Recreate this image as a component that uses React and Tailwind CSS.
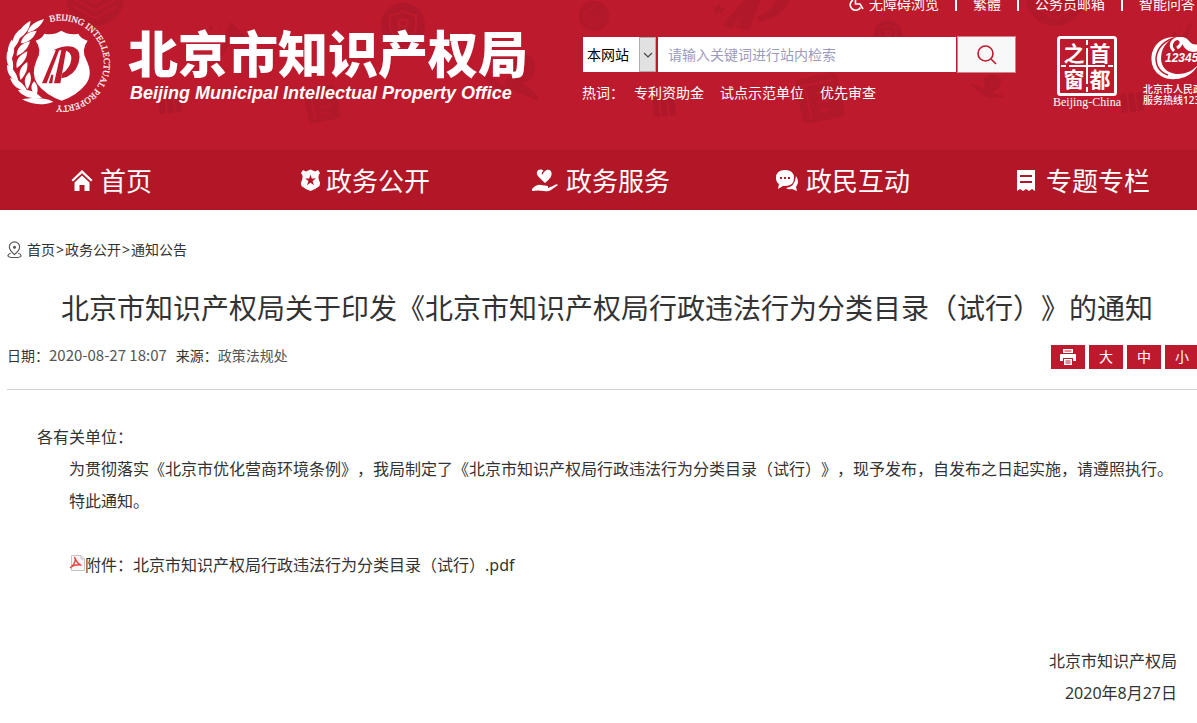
import React from 'react';

const SANS = "font-['Noto_Sans','Noto_Sans_CJK_SC',sans-serif]";

function Emblem() {
  return (
    <svg viewBox="0 0 390 375" className="h-[125px] w-[130px] shrink-0" role="img" aria-label="北京市知识产权局徽标">
      <defs>
        <path id="ring" d="M150 66A128 128 0 0 1 312 190A128 128 0 0 1 130 306" />
      </defs>
      <g fill="#fff">
        <path d="M132 57C100 66 88 78 82 98C106 92 124 78 132 57Z" />
        <path d="M92 62C66 76 54 92 56 116C76 104 88 88 92 62Z" />
        <path d="M110 92C82 94 66 110 62 130C86 128 102 114 110 92Z" />
        <path d="M62 86C40 104 34 122 40 146C56 128 64 110 62 86Z" />
        <path d="M90 124C62 130 50 146 50 168C70 160 84 146 90 124Z" />
        <path d="M36 118C20 142 20 162 32 182C44 162 46 142 36 118Z" />
        <path d="M82 154C56 166 46 182 50 204C68 192 80 178 82 154Z" />
        <path d="M22 154C16 180 22 198 38 214C42 190 38 172 22 154Z" />
        <path d="M82 186C60 200 54 218 62 240C78 222 84 208 82 186Z" />
        <path d="M21 194C20 220 32 236 56 248C52 224 42 206 21 194Z" />
        <path d="M88 216C72 232 70 248 82 268C94 248 96 232 88 216Z" />
        <path d="M30 234C38 258 54 270 82 273C72 252 56 238 30 234Z" />
        <path d="M102 244C90 258 92 272 108 290C116 270 114 256 102 244Z" />
        <path d="M54 270C68 290 92 298 126 294C108 274 84 266 54 270Z" />
        <path d="M66 298C92 294 126 290 160 305C126 319 92 313 66 298Z" />
        <path d="M133 101Q160 107 184 92Q208 107 235 101Q242 116 263 122Q242 150 259 180Q280 222 258 252Q232 286 185 302Q138 286 112 252Q92 222 110 180Q128 150 107 122Q126 116 133 101Z" />
      </g>
      <g fill="#bd1a2d">
        <path d="M126 250L169 147H179L140 250Z" />
        <path d="M146 250L154 224H160L157 250Z" />
        <path d="M162 250L185 147H199L181 250Z" />
        <path d="M160 151Q196 132 222 142Q246 154 236 188Q224 228 184 235L187 220Q210 206 214 178Q215 153 190 151Z" />
      </g>
      <text fill="#fff" fontFamily="Liberation Serif" fontSize="27" fontWeight="400" stroke="#fff" strokeWidth="0.6">
        <textPath href="#ring">BEIJING INTELLECTUAL PROPERTY</textPath>
      </text>
    </svg>
  );
}

function RBadge({ x, y, s }) {
  return (
    <g transform={`translate(${x} ${y}) scale(${s})`}>
      <circle r="22" fill="#ae182a" />
      <path d="M0-14C4-11 8-10 13-10V2C13 9 6 13 0 16C-6 13-13 9-13 2V-10C-8-10-4-11 0-14Z" fill="none" stroke="#bd1a2d" strokeWidth="2" />
      <path d="M-4 6V-5H1Q5-5 5-2T1 1H-4M1 1L5 6" fill="none" stroke="#bd1a2d" strokeWidth="2.5" />
    </g>
  );
}

function Book({ x, y, s }) {
  return (
    <g transform={`translate(${x} ${y}) rotate(-12) scale(${s})`}>
      <rect x="-17" y="-18" width="34" height="36" rx="4" fill="#b1182a" />
      <path d="M-14-12H14M-10-12V15M-3-4H10M-3 3H10M-3 10H5" fill="none" stroke="#bd1a2d" strokeWidth="2" />
    </g>
  );
}

function Shelf({ x, y }) {
  return (
    <g transform={`translate(${x} ${y}) rotate(-6)`} fill="#ae182a">
      <rect x="-11" y="-9" width="6" height="19" rx="1" />
      <rect x="-3" y="-9" width="6" height="19" rx="1" />
      <rect x="5" y="-9" width="6" height="19" rx="1" />
    </g>
  );
}

function Stack({ x, y, r }) {
  return (
    <g transform={`translate(${x} ${y}) scale(${r / 15})`}>
      <circle r="15" fill="#b1182a" />
      <path d="M0-9L11-3L0 3L-11-3ZM-11 1L0 7L11 1M-11 5L0 11L11 5" fill="none" stroke="#bd1a2d" strokeWidth="1" />
    </g>
  );
}

function Pattern() {
  return (
    <svg className="absolute left-0 top-0 h-[150px] w-[1200px]" viewBox="0 0 1200 150" aria-hidden="true">
      <Stack x={95} y={-3} r={29} />
      <Stack x={1055} y={-3} r={29} />
      <Stack x={594} y={16} r={15} />
      <RBadge x={403} y={25} s={1} />
      <RBadge x={888} y={34} s={0.62} />
      <Book x={322} y={104} s={0.95} />
      <Book x={820} y={98} s={1.25} />
      <Shelf x={170} y={103} />
      <Shelf x={664} y={106} />
      <Shelf x={1132} y={102} />
      <g fill="#b1182a">
        <path d="M230 22L246 36L234 37L222 56H218Z" />
        <circle cx="211" cy="28" r="2" /><circle cx="220" cy="26" r="1" />
        <path d="M1178 46L1190 22L1192 24L1184 44Z" />
        <circle cx="1174" cy="34" r="2" /><circle cx="1180" cy="27" r="1" />
        <path d="M719 3L721 8L726 8L722 11L724 15L719 12L714 15L715 10L712 7L717 7Z" />
        <path d="M723 25L744 0H752L732 29ZM736 28L748 0H761L749 30ZM758 22Q782 18 790 0H776Q770 14 757 16Z" />
        <path d="M520 54Q535 53 535 68Q534 82 522 82L538 96V101L504 86L507 77L516 79Q507 66 520 54Z" />
        <path d="M482 76L502 94L510 96L505 87L486 73Z" />
        <path d="M983 79Q993 71 1001 78Q1003 88 991 93L1003 95V98H990Q978 94 970 83L980 87L986 90Z" />
      </g>
    </svg>
  );
}

function CapitalWindow() {
  return (
    <a href="#capital" className="flex w-[68px] shrink-0 flex-col items-center text-white">
      <svg viewBox="0 0 60 60" className="h-[60px] w-[60px] shrink-0">
        <rect x="1.5" y="1.5" width="57" height="57" rx="2" fill="none" stroke="#fff" strokeWidth="3" />
        <path d="M30 4V9M30 12V48M30 51V56M4 30H9M12 30H48M51 30H56" stroke="#fff" strokeWidth="2" />
        <g fill="#fff" fontFamily="Noto Sans CJK SC" fontWeight="700" fontSize="21" textAnchor="middle">
          <text x="17" y="25">之</text>
          <text x="43" y="25">首</text>
          <text x="17" y="51">窗</text>
          <text x="43" y="51">都</text>
        </g>
      </svg>
      <span className="font-['Liberation_Serif',serif] text-[12px] leading-[12px] whitespace-nowrap">Beijing-China</span>
    </a>
  );
}

function Hotline() {
  return (
    <a href="#hotline" className="flex w-[76px] shrink-0 flex-col text-white">
      <svg viewBox="0 0 60 48" className="ml-[8px] h-[48px] w-[60px] shrink-0">
        <path d="M24 1Q6 1 1 17Q-2 33 10 40Q20 46 34 41Q43 37 47 29Q38 39 25 38Q11 36 10 23Q10 8 24 1Z" fill="#fff" />
        <path d="M26 1Q7 6 5 22Q5 35 17 39" fill="none" stroke="#bd1a2d" strokeWidth="1.5" />
        <path d="M23 15Q18 10 22 5Q27 0 30 5Q31 9 26 12" fill="none" stroke="#fff" strokeWidth="3" />
        <path d="M24 2Q34-1 38 5Q42 10 48 8V15Q38 18 33 11Q30 5 24 2Z" fill="#fff" />
        <text x="14" y="26" fill="#fff" fontFamily="Liberation Sans" fontStyle="italic" fontWeight="700" fontSize="12">12345</text>
      </svg>
      <span className="text-[10px] leading-[11px] font-medium whitespace-nowrap">北京市人民政府</span>
      <span className="text-[10px] leading-[11px] font-medium whitespace-nowrap">服务热线12345</span>
    </a>
  );
}

const Divider = () => <span className="h-[14px] w-[2px] bg-white" />;

function Header() {
  return (
    <header className="relative overflow-hidden bg-[#bd1a2d] text-white">
      <Pattern />
      <div className="relative flex h-[150px]">
        <a href="#home" className="flex w-[582px] shrink-0 text-white">
          <Emblem />
          <span className="-ml-[2px] flex flex-col pt-[26px]">
            <span className="font-['Noto_Sans_CJK_SC',sans-serif] text-[50px] leading-[50px] font-black whitespace-nowrap">北京市知识产权局</span>
            <span className="mt-[6px] pl-[2px] font-['Liberation_Sans',sans-serif] text-[18px] leading-[22px] font-bold italic whitespace-nowrap">
              Beijing Municipal Intellectual Property Office
            </span>
          </span>
        </a>
        <div className="min-w-0 flex-1">
          <div className="-mt-[6px] flex h-[20px] items-center justify-end gap-[16px] pr-[2px] text-[14px] leading-[20px] whitespace-nowrap">
            <a href="#accessible" className="flex items-center gap-[5px]">
              <svg viewBox="0 0 16 16" className="h-4 w-4" fill="none" stroke="#fff" strokeWidth="1.6">
                <path d="M5 4A5.500 5.500 0 1 0 12.500 11.500M7.500 2V8H12L15 13" />
              </svg>
              无障碍浏览
            </a>
            <Divider />
            <a href="#traditional">繁體</a>
            <Divider />
            <a href="#mail">公务员邮箱</a>
            <Divider />
            <a href="#qa">智能问答</a>
          </div>
          <div className="mt-[22px] flex">
            <div className="w-[434px] shrink-0">
              <form className="flex h-[37px] items-center" onSubmit={(e) => e.preventDefault()}>
                <div className="relative ml-px h-[35px] w-[73px]">
                  <select aria-label="检索范围" className="h-full w-full appearance-none bg-white pl-1 text-[14px] text-black outline-none">
                    <option>本网站</option>
                  </select>
                  <span className="pointer-events-none absolute top-0 right-0 flex h-full w-[17px] items-center justify-center border border-[#adadad] bg-[#e1e1e1]">
                    <svg viewBox="0 0 10 10" className="h-[10px] w-[10px]" fill="none" stroke="#444" strokeWidth="1.2"><path d="M1 3L5 7L9 3" /></svg>
                  </span>
                </div>
                <input
                  aria-label="站内检索"
                  placeholder="请输入关键词进行站内检索"
                  className="ml-[2px] h-[35px] min-w-0 flex-1 bg-white px-[10px] text-[14px] text-black placeholder-[#9c9bbd] outline-none"
                />
                <button type="submit" aria-label="搜索" className="ml-px flex h-[37px] w-[59px] items-center justify-center border border-[#d0828b] bg-[#f8f8f8]">
                  <svg viewBox="0 0 20 20" className="h-5 w-5" fill="none" stroke="#bd1a2d" strokeWidth="1.6"><circle cx="8.500" cy="8.500" r="7.500" /><path d="M14 14L19 19" /></svg>
                </button>
              </form>
              <div className="mt-[10px] flex gap-4 text-[14px] leading-[20px] whitespace-nowrap">
                <span className="-mr-[6px]">热词：</span>
                <a href="#fund">专利资助金</a>
                <a href="#pilot">试点示范单位</a>
                <a href="#priority">优先审查</a>
              </div>
            </div>
            <div className="ml-[37px] flex gap-[22px]">
              <CapitalWindow />
              <Hotline />
            </div>
          </div>
        </div>
      </div>
    </header>
  );
}

const navItems = [
  { label: '首页', icon: <path d="M18 1L28.500 11L27 12.500L18 4.300L9 12.500L7.500 11ZM18 6.500L25.500 13.500V22H20.500V16H15.500V22H10.500V13.500Z" /> },
  {
    label: '政务公开',
    icon: (
      <path fillRule="evenodd" d="M13 1L16 2.500L20.500 .5L25 2.500L28 1L30 4Q27.500 7 29 11Q31 14 29.500 17Q26 20 20.500 22Q15 20 11.500 17Q10 14 12 11Q13.500 7 11 4ZM20.500 5.500L19.200 9.500H15L18.400 12L17 16.200L20.500 13.700L24 16.200L22.600 12L26 9.500H21.800Z" />
    ),
  },
  {
    label: '政务服务',
    icon: (
      <path d="M15 14C9 8 6 6 7 3C8 0 12 0 13.500 2Q11 3 12 6Q13 4 14.500 2.500C17 0 21 0 21.500 4C22 7 20 10 15 14ZM2 20Q7 15 11 16L18 17V19L23 17Q27 14 28 16L21 21Q18 23 14 22L8 21.500L2 22Z" />
    ),
  },
  {
    label: '政民互动',
    icon: (
      <>
        <path fillRule="evenodd" d="M15 1Q24 1 24 9T15 17L13 17L8 20L9 15Q6 13 6 9Q6 1 15 1ZM10 8V10H12V8ZM14 8V10H16V8ZM18 8V10H20V8Z" />
        <path d="M26 7Q30 13 26 18L27 22L22 20Q18 21 16 19Q25 18 26 7Z" />
      </>
    ),
  },
  {
    label: '专题专栏',
    icon: <path fillRule="evenodd" d="M7 1H25V22L22 20L19 22L16 20L13 22L10 20L7 22ZM10 6V8H22V6ZM10 12V14H22V12Z" />,
  },
];

function Nav() {
  return (
    <nav className="overflow-hidden bg-[#b21728]">
      <ul className="-mr-[3px] grid grid-cols-5">
        {navItems.map((item, i) => (
          <li key={item.label} className={i === 0 ? 'pr-[24px]' : ''}>
            <a href="#nav" className="flex h-[60px] items-center justify-center pt-[2px] text-[26px] leading-[36px] whitespace-nowrap text-white">
              <svg viewBox="0 0 36 24" className="h-6 w-9 shrink-0" fill="#fff">{item.icon}</svg>
              <span>{item.label}</span>
            </a>
          </li>
        ))}
      </ul>
    </nav>
  );
}

const toolButton = 'flex h-6 w-[34px] items-center justify-center bg-[#bd1a2d] text-[14px] leading-[20px] text-white';

function Article() {
  return (
    <main className="overflow-hidden">
      <div className="-mr-[10px] ml-[7px] text-[#333]">
        <div className="flex items-center gap-[5px] pt-[30px] text-[14px] leading-[20px]">
          <svg viewBox="0 0 16 18" className="h-[18px] w-[15px]" fill="none" stroke="#555" strokeWidth="1.2">
            <path d="M8 14Q2.500 9 2.500 5.800A5.300 5.300 0 0 1 13.500 5.800Q13.500 9 8 14ZM4 12.500Q1 13.500 1 15Q1 17 8 17T15 15Q15 13.500 12 12.500" />
            <circle cx="8" cy="6" r="1" fill="#555" />
          </svg>
          <div className="flex gap-px">
            <a href="#home">首页</a>
            <span>&gt;</span>
            <a href="#open">政务公开</a>
            <span>&gt;</span>
            <a href="#notice">通知公告</a>
          </div>
        </div>
        <h1 className="mt-[28px] text-center text-[28px] leading-[40px] whitespace-nowrap">
          北京市知识产权局关于印发《北京市知识产权局行政违法行为分类目录（试行）》的通知
        </h1>
        <div className="mt-[17px] flex justify-between border-b border-[#d0d0d0] pb-[20px] text-[14px] leading-[20px]">
          <p className="text-[#555]">
            <span className="text-[#333]">日期：</span>
            <span className="mr-[9px] font-['Noto_Sans_CJK_SC',sans-serif] text-[15px]">2020-08-27 18:07</span>
            <span className="text-[#333]">来源：</span>政策法规处
          </p>
          <div className="mr-[8px] flex gap-1">
            <button type="button" aria-label="打印" className={toolButton}>
              <svg viewBox="0 0 16 16" className="h-4 w-4">
                <path d="M3 0H13V4H3ZM1 5H15Q16 5 16 6V12H13V9H3V12H0V6Q0 5 1 5ZM4 10H12V16H4Z" fill="#fff" />
                <path d="M4.500 2H11.500M5.500 12H10.500M5.500 14H10.500" stroke="#bd1a2d" />
              </svg>
            </button>
            <button type="button" className={toolButton}>大</button>
            <button type="button" className={toolButton}>中</button>
            <button type="button" className={toolButton}>小</button>
          </div>
        </div>
        <div className="px-[30px] pt-[31px] text-[16px] leading-[32px]">
          <p>各有关单位：</p>
          <p className="indent-[32px]">
            为贯彻落实《北京市优化营商环境条例》，我局制定了《北京市知识产权局行政违法行为分类目录（试行）》，现予发布，自发布之日起实施，请遵照执行。
          </p>
          <p className="indent-[32px]">特此通知。</p>
          <p className="mt-8 flex pl-8">
            <svg viewBox="0 0 16 16" className="mt-[6px] h-4 w-4" fill="none">
              <path d="M2.500 .5H12L15.500 4V15.500H2.500Z" fill="#f7f7f7" stroke="#c4c4c4" />
              <path d="M12 .5V4H15.500" stroke="#c4c4c4" />
              <path d="M5.500 2Q7 7 11.500 10.500M6.500 4Q6 9 1 13M2 12Q6 9 12.500 10" stroke="#e2403c" strokeWidth="1.300" />
            </svg>
            <a href="#attachment">附件：北京市知识产权局行政违法行为分类目录（试行）.pdf</a>
          </p>
          <div className="mt-16 text-right">
            <p>北京市知识产权局</p>
            <p>2020年8月27日</p>
          </div>
        </div>
      </div>
    </main>
  );
}

export default function App() {
  return (
    <div className={`${SANS} min-h-screen overflow-x-hidden bg-white [text-spacing-trim:space-all]`} lang="zh-CN">
      <Header />
      <Nav />
      <Article />
    </div>
  );
}
